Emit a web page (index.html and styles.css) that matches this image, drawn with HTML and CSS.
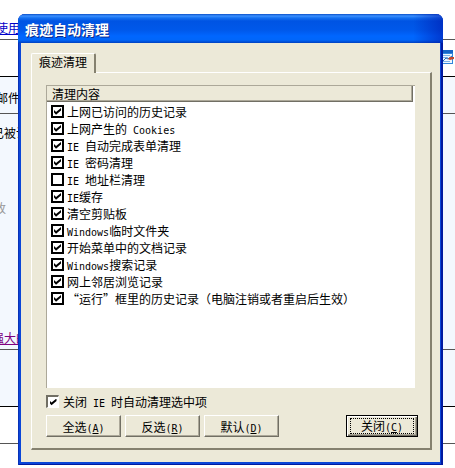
FILE: index.html
```html
<!DOCTYPE html>
<html lang="zh-CN">
<head>
    <meta charset="UTF-8">
    <meta name="viewport" content="width=device-width, initial-scale=1.0">
    <title>痕迹自动清理</title>
    <link rel="stylesheet" href="styles.css">
</head>
<body>
    <div class="page">
        <div class="row row-top"><a class="link" href="#">使用</a></div>
        <div class="row row-tools">
            <svg class="note-icon" width="12" height="15" viewBox="0 0 12 15">
                <rect x="0" y="0" width="11" height="14" fill="#2f86dc"/>
                <rect x="0" y="0" width="11" height="3" fill="#1464c8"/>
                <rect x="0" y="4" width="10" height="9" fill="#eef7ff"/>
                <path d="M0 5.500h8M0 7.500h6M0 11.500h8" stroke="#7db4e8"/>
                <path d="M1 11l3-3 2 1 4-3" fill="none" stroke="#2668b8"/>
                <path d="M6 9l2-2h4v2l-4 1z" fill="#c5482c"/>
            </svg>
        </div>
        <div class="row row-mail">邮件</div>
        <div class="row row-main">
            <p>已被访</p>
            <p class="muted">改</p>
            <a class="link visited" href="#">强大的</a>
        </div>
        <div class="row row-blank"></div>
        <div class="row row-end"></div>
    </div>

    <form class="dialog">
        <h1 class="titlebar">痕迹自动清理</h1>
        <div class="dialog-body">
            <div class="tab">痕迹清理</div>
            <div class="panel">
                <div class="list">
                    <div class="list-header">清理内容</div>
                    <ul class="items">
                        <li><label><input type="checkbox" checked><span>上网已访问的历史记录</span></label></li>
                        <li><label><input type="checkbox" checked><span>上网产生的<span class="en"> Cookies</span></span></label></li>
                        <li><label><input type="checkbox" checked><span><span class="en">IE </span>自动完成表单清理</span></label></li>
                        <li><label><input type="checkbox" checked><span><span class="en">IE </span>密码清理</span></label></li>
                        <li><label><input type="checkbox"><span><span class="en">IE </span>地址栏清理</span></label></li>
                        <li><label><input type="checkbox" checked><span><span class="en">IE</span>缓存</span></label></li>
                        <li><label><input type="checkbox" checked><span>清空剪贴板</span></label></li>
                        <li><label><input type="checkbox" checked><span><span class="en">Windows</span>临时文件夹</span></label></li>
                        <li><label><input type="checkbox" checked><span>开始菜单中的文档记录</span></label></li>
                        <li><label><input type="checkbox" checked><span><span class="en">Windows</span>搜索记录</span></label></li>
                        <li><label><input type="checkbox" checked><span>网上邻居浏览记录</span></label></li>
                        <li><label><input type="checkbox" checked><span>“运行”框里的历史记录（电脑注销或者重启后生效）</span></label></li>
                    </ul>
                </div>
                <label class="auto-clean"><input type="checkbox" checked><span>关闭<span class="en"> IE </span>时自动清理选中项</span></label>
                <div class="buttons">
                    <button type="button">全选<span class="en">(<u>A</u>)</span></button>
                    <button type="button">反选<span class="en">(<u>R</u>)</span></button>
                    <button type="button">默认<span class="en">(<u>D</u>)</span></button>
                    <button type="button" class="close"><span class="focus">关闭<span class="en">(<u>C</u>)</span></span></button>
                </div>
            </div>
        </div>
    </form>
</body>
</html>
```

FILE: styles.css
```css
* {
    margin: 0;
    padding: 0;
    box-sizing: border-box;
}

body {
    font: 12px/17px "Noto Sans CJK SC", sans-serif;
    color: #000;
    background: #fff;
    height: 100vh;
    overflow: hidden;
    position: relative;
}

/* page behind the dialog */
.row {
    border-bottom: 1px solid #555;
    text-indent: -4px;
}

.row-top {
    height: 40px;
    padding-top: 19px;
}

.row-tools {
    height: 37px;
    border-color: #000;
    display: flex;
    justify-content: flex-end;
    align-items: flex-start;
    padding: 10px 1px 0 0;
}

.row-mail,
.row-main,
.row-blank {
    background: #f3f8fe;
}

.row-mail {
    height: 37px;
    padding-top: 12px;
}

.row-main {
    height: 236px;
    padding: 10px 0 3px;
    display: flex;
    flex-direction: column;
    justify-content: space-between;
    align-items: flex-start;
    text-indent: -8px;
}

.row-main .muted {
    color: #999;
    margin-bottom: 56px;
    text-indent: -6px;
}

.row-blank {
    height: 57px;
    border-color: #000;
}

.row-end {
    height: 37px;
}

.link {
    color: #0000c8;
}

.link.visited {
    color: #800080;
}

/* dialog window */
.dialog {
    position: absolute;
    top: 14px;
    right: 12px;
    bottom: 3px;
    left: 18px;
    display: flex;
    flex-direction: column;
    background: #0a46d8;
    border-radius: 7px 7px 0 0;
    overflow: hidden;
    box-shadow: inset 1px 0 #0831b8, inset -2px -1px #001aa0;
}

.titlebar {
    height: 29px;
    padding-left: 7px;
    font-size: 14px;
    line-height: 30px;
    color: #fff;
    text-shadow: 1px 1px #0b2a8c;
    background:
        linear-gradient(to right, transparent 93%, rgba(0, 20, 170, 0.55)),
        linear-gradient(#0a4fc8 0, #3b90ff 2px, #1470f0 4px, #0054e3 7px, #0058ea 16px, #0066ff 22px, #0066fa 26px, #0040c0 29px);
}

.dialog-body {
    flex: 1;
    display: flex;
    flex-direction: column;
    margin: 0 3px 3px;
    padding: 10px 8px 12px 10px;
    background: #ece9d8;
}

.tab {
    align-self: flex-start;
    height: 20px;
    margin-bottom: -1px;
    padding: 0 7px;
    line-height: 16px;
    border: 1px solid #fff;
    border-right: 2px solid #85816f;
    border-bottom: 0;
    border-radius: 2px 2px 0 0;
    background: #ece9d8;
    z-index: 1;
}

.panel {
    flex: 1;
    display: flex;
    flex-direction: column;
    padding: 12px 12px 11px 14px;
    border: 1px solid #fff;
    border-right: 2px solid #85816f;
    border-bottom: 2px solid #85816f;
}

.list {
    flex: 1;
    margin-right: 3px;
    border-top: 1px solid #aca899;
    border-left: 1px solid #aca899;
    background: #fff;
}

.list-header {
    height: 16px;
    margin-right: 2px;
    padding-left: 5px;
    line-height: 15px;
    background: #ece9d8;
    border-right: 1px solid #716f64;
    border-bottom: 1px solid #716f64;
    box-shadow: inset -1px -1px #aca899;
}

.items {
    list-style: none;
    padding: 1px 0 0 4px;
}

label {
    display: flex;
    align-items: center;
    height: 17px;
    white-space: pre;
}

/* 6px wide latin letters, half of a chinese one */
.en {
    font-family: "DejaVu Sans Mono", monospace;
    font-size: 10px;
    line-height: 1;
}

input[type="checkbox"] {
    appearance: none;
    flex: none;
    width: 13px;
    height: 13px;
    margin-right: 3px;
    border: 2px solid #000;
    background: #fff;
    display: grid;
    place-items: center;
}

input[type="checkbox"]:checked::before {
    content: "";
    width: 7px;
    height: 7px;
    background: #000;
    clip-path: polygon(0 29%, 29% 57%, 100% 0, 100% 35%, 29% 95%, 0 66%);
}

.auto-clean {
    margin: 5px 0;
}

.auto-clean input[type="checkbox"] {
    margin-right: 4px;
    border: 2px solid #716f64;
    border-right: 1px solid #fff;
    border-bottom: 1px solid #fff;
}

.buttons {
    display: flex;
    gap: 4px;
}

button {
    width: 75px;
    height: 22px;
    font: inherit;
    color: #000;
    background: #ece9d8;
    border: 1px solid #fff;
    border-right-color: #716f64;
    border-bottom-color: #716f64;
    box-shadow: inset -1px -1px #aca899;
}

.close {
    width: 72px;
    margin-left: auto;
    padding: 2px;
    border-color: #000;
    box-shadow: inset 1px 1px #fff, inset -1px -1px #716f64, inset -2px -2px #aca899;
}

.focus {
    display: block;
    margin: 0 1px;
    line-height: 13px;
    border: 1px dotted #000;
}
```
